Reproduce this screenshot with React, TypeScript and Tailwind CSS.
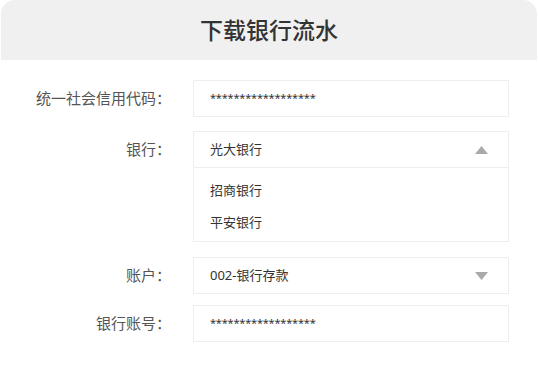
import React from "react";

const font = { fontFamily: '"Noto Sans", "Noto Sans CJK SC", sans-serif' };

const Triangle: React.FC<{ up?: boolean }> = ({ up }) => (
  <svg width="13" height="8" viewBox="0 0 13 8" className="fill-[#aaaaaa]">
    {up ? <polygon points="6.5,0 13,8 0,8" /> : <polygon points="0,0 13,0 6.5,8" />}
  </svg>
);

const Label: React.FC<{ text: string }> = ({ text }) => (
  <div className="w-[171px] shrink-0 h-[37px] flex items-center justify-end text-[15px] text-[#555555]">
    {text}：
  </div>
);

const Masked: React.FC = () => (
  <span className="text-[11px] tracking-[-0.2px] text-[#333333]">******************</span>
);

const App: React.FC = () => {
  return (
    <div className="w-[538px] h-[374px] bg-white" style={font}>
      <div className="mx-px h-[60px] rounded-t-[14px] bg-[#f0f0f0] flex items-center justify-center">
        <h1 className="text-[23px] font-medium text-[#333333]">下载银行流水</h1>
      </div>

      <div className="pt-5">
        {/* 统一社会信用代码 */}
        <div className="flex items-start">
          <Label text="统一社会信用代码" />
          <div className="ml-[22px] w-[316px] h-[37px] border border-[#eeeeee] flex items-center pl-4">
            <Masked />
          </div>
        </div>

        {/* 银行 */}
        <div className="flex items-start mt-[14px]">
          <Label text="银行" />
          <div className="ml-[22px] w-[316px] border border-[#eeeeee]">
            <div className="h-[36px] flex items-center justify-between pl-4 pr-[20px] text-[13px] text-[#333333] border-b border-[#eeeeee]">
              <span>光大银行</span>
              <Triangle up />
            </div>
            <div className="pt-[7px] pb-[2px] text-[13px] text-[#333333]">
              <div className="h-8 flex items-center pl-4">招商银行</div>
              <div className="h-8 flex items-center pl-4">平安银行</div>
            </div>
          </div>
        </div>

        {/* 账户 */}
        <div className="flex items-start mt-[15px]">
          <Label text="账户" />
          <div className="ml-[22px] w-[316px] h-[37px] border border-[#eeeeee] flex items-center justify-between pl-4 pr-[20px] text-[13px] text-[#333333]">
            <span>002-银行存款</span>
            <Triangle />
          </div>
        </div>

        {/* 银行账号 */}
        <div className="flex items-start mt-[11px]">
          <Label text="银行账号" />
          <div className="ml-[22px] w-[316px] h-[37px] border border-[#eeeeee] flex items-center pl-4">
            <Masked />
          </div>
        </div>
      </div>
    </div>
  );
};

export default App;
